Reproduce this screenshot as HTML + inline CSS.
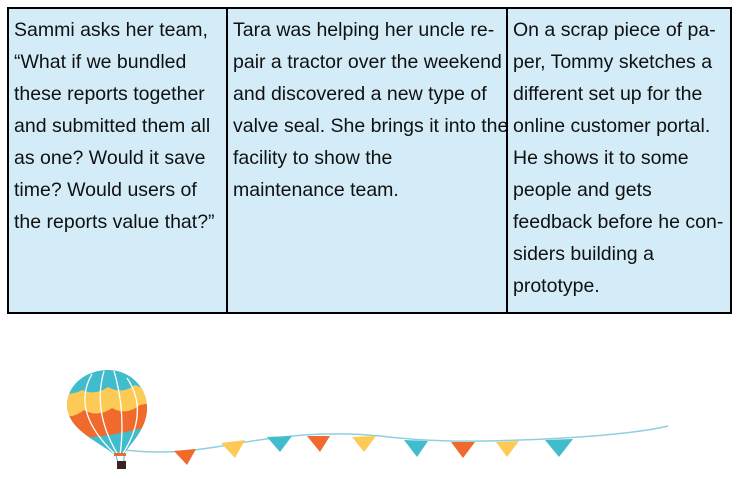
<!DOCTYPE html>
<html><head><meta charset="utf-8"><style>
body{margin:0;width:737px;height:479px;background:#fff;overflow:hidden;font-family:"Liberation Sans",sans-serif;}
table{position:absolute;left:7px;top:7px;border-collapse:collapse;table-layout:fixed;width:723px;}
td{border:2.5px solid #000;background:#d3ecf7;vertical-align:top;font-size:19.5px;line-height:32px;color:#111;padding:5px 1px 10px 5px;height:284px;white-space:nowrap;overflow:hidden;box-sizing:border-box;}
</style></head><body>
<table><tr>
<td style="width:219px">Sammi asks her team,<br>“What if we bundled<br>these reports together<br>and submitted them all<br>as one? Would it save<br>time? Would users of<br>the reports value that?”</td>
<td style="width:280px">Tara was helping her uncle re-<br>pair a tractor over the weekend<br>and discovered a new type of<br>valve seal. She brings it into the<br>facility to show the<br>maintenance team.</td>
<td style="width:224px">On a scrap piece of pa-<br>per, Tommy sketches a<br>different set up for the<br>online customer portal.<br>He shows it to some<br>people and gets<br>feedback before he con-<br>siders building a<br>prototype.</td>
</tr></table>
<svg width="737" height="479" style="position:absolute;left:0;top:0">
<path d="M125 450 C170 455 200 450 240 443 C300 433 340 432 380 436 C430 442 470 442 520 440 C580 438 640 433 668 426" stroke="#8fd0e0" stroke-width="1.5" fill="none"/>
<g>
<polygon points="174,451 196,449 187,465" fill="#ef6a2c"/>
<polygon points="221,443 245,440 235,458" fill="#fdcb55"/>
<polygon points="267,437 292,436 280,452" fill="#41bccd"/>
<polygon points="307,436 330,436 320,452" fill="#ef6a2c"/>
<polygon points="352,437 376,436 364,452" fill="#fdcb55"/>
<polygon points="404,440 428,441 417,457" fill="#41bccd"/>
<polygon points="451,442 475,442 463,458" fill="#ef6a2c"/>
<polygon points="496,442 519,441 507,457" fill="#fdcb55"/>
<polygon points="545,440 573,439 559,457" fill="#41bccd"/>
</g>
<defs><clipPath id="b"><path d="M108 370 C130 370 147 387 147 408 C147 428 132 442 123 455 L115 455 C100 442 67 430 67 405 C67 385 86 370 108 370Z"/></clipPath></defs>
<g clip-path="url(#b)">
<rect x="60" y="365" width="95" height="100" fill="#41bccd"/>
<path d="M60 392 Q72 396 82 390 Q95 396 108 387 Q122 395 135 385 Q145 390 155 386 L155 420 L60 420Z" fill="#fdcb55"/>
<path d="M60 414 Q72 420 84 410 Q98 418 112 408 Q126 416 140 405 L155 402 L155 440 L60 440Z" fill="#ef6a2c"/>
<path d="M60 438 Q100 440 155 425 L155 460 L60 460Z" fill="#41bccd"/>
<g stroke="#fff" stroke-width="1.3" fill="none">
<path d="M92 374 Q70 412 116 455"/><path d="M104 371 Q92 412 118 455"/><path d="M114 371 Q126 412 120 455"/><path d="M127 378 Q150 412 122 455"/>
</g>
</g>
<rect x="114" y="453" width="12" height="3" fill="#ef6a2c"/>
<line x1="116" y1="456" x2="118" y2="462" stroke="#41bccd"/><line x1="124" y1="456" x2="124" y2="462" stroke="#41bccd"/>
<rect x="117" y="461" width="9" height="8" fill="#3a2420"/>
</svg>
</body></html>
